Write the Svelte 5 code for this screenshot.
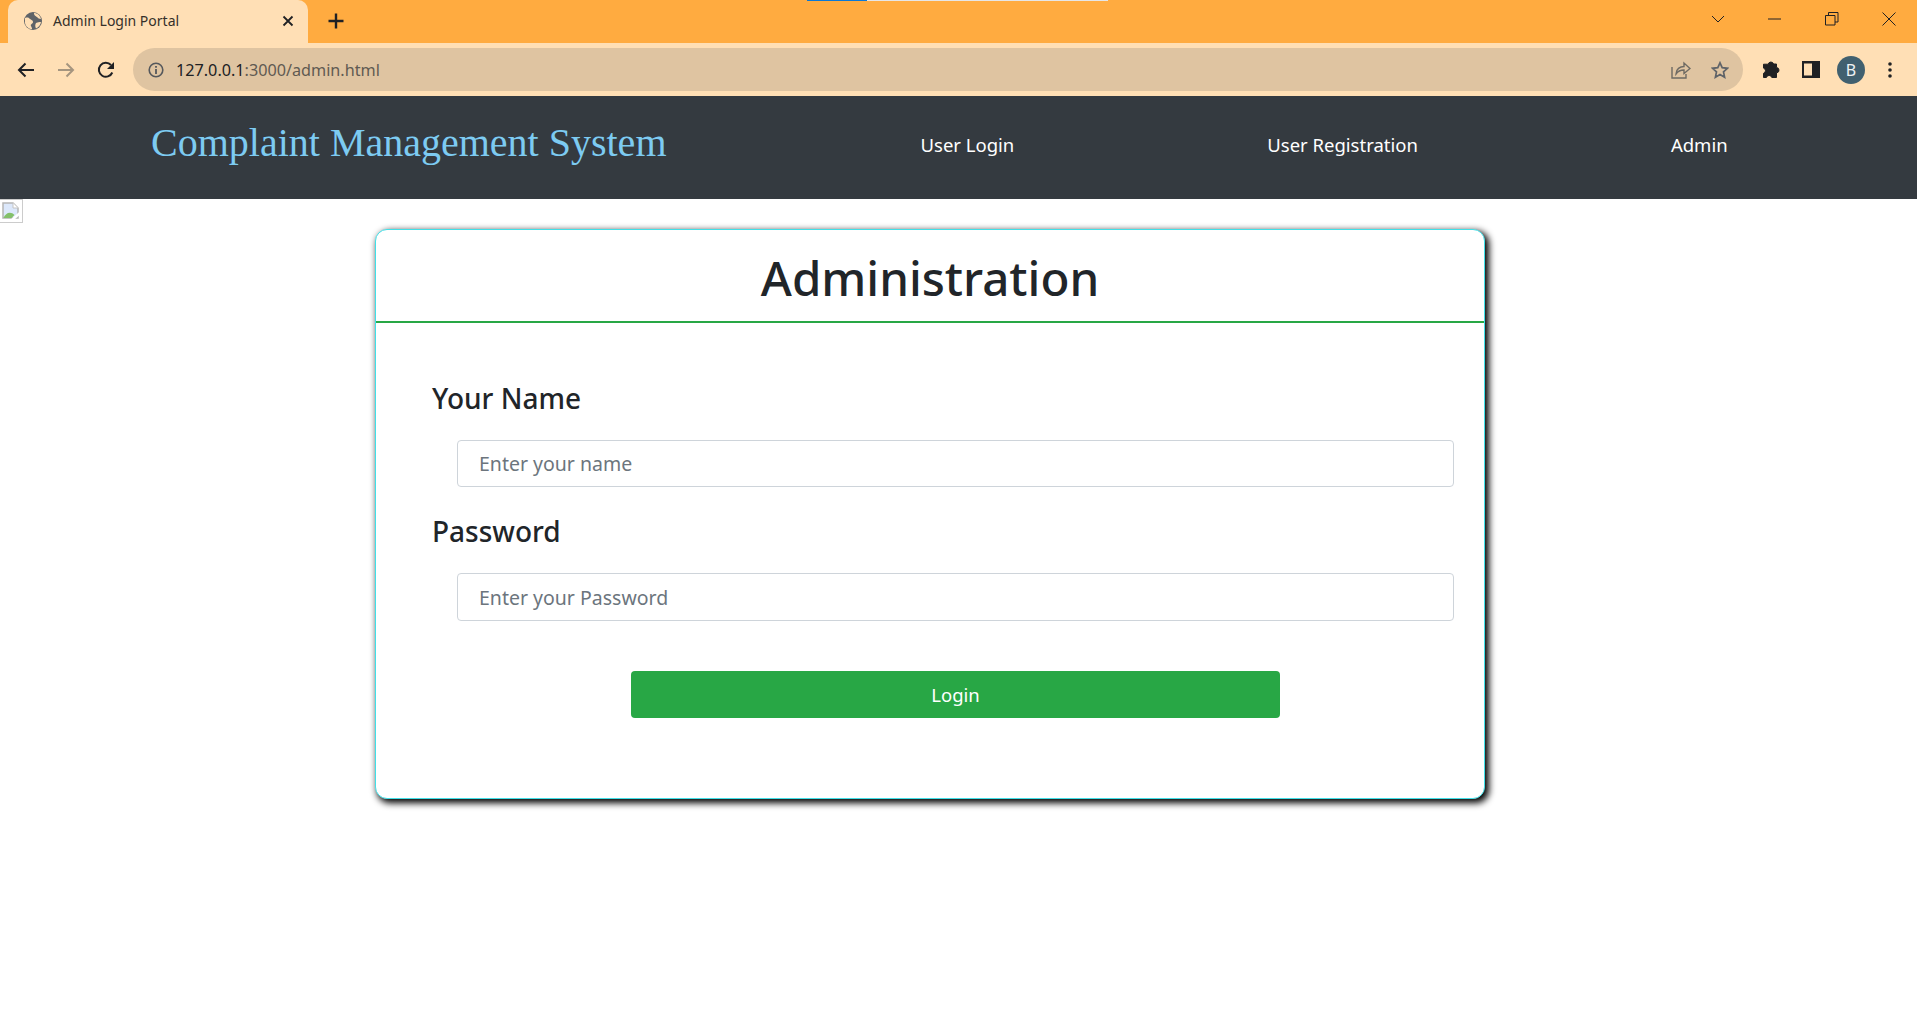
<script lang="ts">
	const navLinks = [
		{ label: 'User Login', cls: 'first' },
		{ label: 'User Registration', cls: 'second' },
		{ label: 'Admin', cls: 'third' }
	];
</script>

<div class="tabstrip">
	<div class="loadbar"><span></span></div>
	<div class="tab">
		<svg class="globe" width="18" height="18" viewBox="0 0 18 18">
			<circle cx="9" cy="9" r="9" fill="#5f6368" />
			<path d="M1 6c3-1 4 0 5 1s3 1 3 3-3 2-2 4 1 2 1 3c-3 0-6-2-7-6zM10 1c3 0 6 2 7 6-2 0-3-1-4-2s-3-1-3-4zM12 11c2-1 3-1 5-1-.5 3-2 5-5 6.500-1-2-1-4 0-5.500z" fill="#ffdfb5" />
		</svg>
		<span class="tab-title">Admin Login Portal</span>
		<svg class="tab-close" width="12" height="12" viewBox="0 0 12 12">
			<path d="M1.500 1.500l9 9M10.500 1.500l-9 9" stroke="#202124" stroke-width="1.800" fill="none" />
		</svg>
	</div>
	<svg class="new-tab" width="16" height="16" viewBox="0 0 16 16">
		<path d="M8 .5v15M.5 8h15" stroke="#202124" stroke-width="2.400" fill="none" />
	</svg>
	<div class="window-btns">
		<svg class="chev" width="14" height="8" viewBox="0 0 14 8">
			<path d="M1 1l6 6 6-6" stroke="#202124" fill="none" />
		</svg>
		<svg class="win-min" width="14" height="2" viewBox="0 0 14 2">
			<path d="M0 1h13" stroke="#202124" />
		</svg>
		<svg class="win-max" width="14" height="14" viewBox="0 0 14 14">
			<path d="M.5 3.500h9.500v9.500H.5zM3.500 3.500V.5h9.500v9.500H10" stroke="#202124" fill="none" />
		</svg>
		<svg class="win-close" width="14" height="14" viewBox="0 0 14 14">
			<path d="M.5.5l13 13M13.500.5l-13 13" stroke="#202124" fill="none" />
		</svg>
	</div>
</div>

<div class="toolbar">
	<svg class="tb-back" width="18" height="16" viewBox="0 0 18 16">
		<path d="M17 8H2M8.500 1.500 2 8l6.500 6.500" stroke="#202124" stroke-width="2" fill="none" />
	</svg>
	<svg class="tb-fwd" width="18" height="16" viewBox="0 0 18 16">
		<path d="M1 8h15M9.500 1.500 16 8l-6.500 6.500" stroke="#a5957f" stroke-width="2" fill="none" />
	</svg>
	<svg class="tb-reload" width="18" height="18" viewBox="0 0 18 18">
		<path d="M15.300 11.500A7 7 0 1 1 14 4" stroke="#202124" stroke-width="2" fill="none" />
		<path d="M17 1v7h-7z" fill="#202124" />
	</svg>
	<div class="omnibox">
		<svg class="info" width="16" height="16" viewBox="0 0 16 16">
			<circle cx="8" cy="8" r="6.800" stroke="#55585c" stroke-width="1.600" fill="none" />
			<path d="M8 7v5M8 4v1.800" stroke="#55585c" stroke-width="1.800" />
		</svg>
		<span class="url"><span class="host">127.0.0.1</span>:3000/admin.html</span>
		<svg class="share" width="20" height="18" viewBox="0 0 20 18">
			<path d="M1 6v11h14v-4" stroke="#6e6a63" stroke-width="1.400" fill="none" />
			<path d="M5 13c0-5 4-7.500 8-7.500V2l6 5.500-6 5V9c-3 0-6 1-8 4z" stroke="#6e6a63" stroke-width="1.400" fill="none" />
		</svg>
		<svg class="star" width="18" height="18" viewBox="0 0 18 18">
			<path d="M9 1.800l2.200 4.900 5.300.6-4 3.600 1.100 5.300L9 13.500l-4.600 2.700 1.100-5.300-4-3.600 5.300-.6z" stroke="#5f6368" stroke-width="1.700" fill="none" />
		</svg>
	</div>
	<svg class="puzzle" width="18" height="18" viewBox="0 0 18 18">
		<path d="M6.200 3.200a2.800 2.800 0 0 1 5.400-.2H14.500v3.500a2.700 2.700 0 0 1 .5 5.300h-.5V16.500H9.800a2.800 2.800 0 0 0-5.400 0H1.500V12.300a2.700 2.700 0 0 0 0-5.200V3.200z" fill="#202124" stroke="#202124" stroke-linejoin="round" />
	</svg>
	<svg class="panel" width="18" height="17" viewBox="0 0 18 17">
		<path d="M0 0h18v17H0zM2 2.500v12h8v-12z" fill="#202124" fill-rule="evenodd" />
	</svg>
	<div class="avatar">B</div>
	<svg class="kebab" width="4" height="16" viewBox="0 0 4 16">
		<circle cx="2" cy="2" r="1.800" fill="#202124" />
		<circle cx="2" cy="8" r="1.800" fill="#202124" />
		<circle cx="2" cy="14" r="1.800" fill="#202124" />
	</svg>
</div>

<nav class="navbar">
	<a class="brand" href="#top">Complaint Management System</a>
	{#each navLinks as link}
		<a class="nav-link {link.cls}" href="#top">{link.label}</a>
	{/each}
</nav>

<div class="broken-img">
	<svg width="20" height="20" viewBox="0 0 20 20">
		<path d="M2 2h10l5 5v10H2z" fill="#dce8fb" stroke="#b5b5b5" stroke-width="1.500" />
		<path d="M2.500 17c2-5 7-7 11-3l-3 3z" fill="#83c06a" />
		<path d="M11 19 19 12" stroke="#fff" stroke-width="2.500" />
		<path d="M12 2v5h5" fill="#fff" stroke="#c4c4c4" />
	</svg>
</div>

<main class="page">
	<form class="card">
		<h1 class="card-title">Administration</h1>
		<div class="card-body">
			<label class="field-label" for="name">Your Name</label>
			<input class="field" id="name" type="text" placeholder="Enter your name" />
			<label class="field-label second-label" for="password">Password</label>
			<input class="field pass-field" id="password" type="password" placeholder="Enter your Password" />
			<button class="login" type="button">Login</button>
		</div>
	</form>
</main>

<style>
	:global(body) {
		margin: 0;
		background: #fff;
		font-family: 'Open Sans', 'Noto Sans', sans-serif;
		color: #212529;
	}

	/* browser chrome */
	.tabstrip {
		height: 43px;
		background: #ffab40;
		display: flex;
		align-items: flex-start;
		position: relative;
	}
	.loadbar {
		position: absolute;
		top: 0;
		left: 807px;
		width: 301px;
		height: 1px;
		background: #e6e6e6;
	}
	.loadbar span {
		display: block;
		width: 60px;
		height: 1px;
		background: #0a78d6;
	}
	.tab {
		margin-left: 8px;
		width: 300px;
		height: 43px;
		box-sizing: border-box;
		background: #ffdfb5;
		border-radius: 10px 10px 0 0;
		display: flex;
		align-items: center;
		padding: 0 14px 2px 16px;
	}
	.tab-title {
		margin-left: 11px;
		font-size: 14px;
		font-family: 'Noto Sans', sans-serif;
		color: #35302a;
		flex: 1;
	}
	.new-tab {
		margin: 13px 0 0 20px;
	}
	.window-btns {
		margin-left: auto;
		height: 37px;
		display: flex;
		align-items: center;
		padding-right: 21px;
		gap: 43px;
	}

	.toolbar {
		height: 53px;
		box-sizing: border-box;
		background: #ffdfb5;
		display: flex;
		align-items: center;
		padding: 0 15px 0 17px;
	}
	.tb-fwd {
		margin-left: 22px;
	}
	.tb-reload {
		margin-left: 22px;
	}
	.omnibox {
		margin-left: 18px;
		width: 1610px;
		height: 43px;
		box-sizing: border-box;
		background: #dfc4a1;
		border-radius: 22px;
		display: flex;
		align-items: center;
		padding: 0 14px 0 15px;
	}
	.url {
		margin-left: 12px;
		font-size: 16.200px;
		color: #5f5a52;
		font-family: 'Noto Sans', sans-serif;
		flex: 1;
	}
	.host {
		color: #202124;
	}
	.star {
		margin-left: 20px;
	}
	.puzzle {
		margin-left: 19px;
	}
	.panel {
		margin-left: 22px;
	}
	.avatar {
		margin-left: 17px;
		width: 28px;
		height: 28px;
		border-radius: 50%;
		background: #41606f;
		color: #eef2f4;
		font-size: 16px;
		font-family: 'Noto Sans', sans-serif;
		display: flex;
		align-items: center;
		justify-content: center;
	}
	.kebab {
		margin-left: 23px;
	}

	/* page */
	.navbar {
		height: 103px;
		background: #343a40;
		display: flex;
		align-items: center;
		padding-left: 151px;
	}
	.brand {
		font-family: 'Liberation Serif', serif;
		font-size: 40px;
		color: #7dcbf2;
		text-decoration: none;
		padding-bottom: 10px;
	}
	.nav-link {
		font-size: 18.500px;
		color: #fff;
		text-decoration: none;
		font-family: 'Noto Sans', sans-serif;
		padding-bottom: 6px;
	}
	.first {
		margin-left: 254px;
	}
	.second {
		margin-left: 253px;
	}
	.third {
		margin-left: 253px;
	}

	.broken-img {
		position: absolute;
		left: 0;
		top: 199px;
		width: 23px;
		height: 24px;
		box-sizing: border-box;
		border: 1px solid #ccc;
		border-left: none;
		display: flex;
		align-items: center;
		justify-content: center;
	}

	.page {
		padding: 30px 0 222px 375px;
	}
	.card {
		width: 1110px;
		height: 570px;
		box-sizing: border-box;
		background: #fff;
		border: 1px solid #40e0e8;
		border-radius: 12px;
		box-shadow: 3px 3px 7px 1px #000;
	}
	.card-title {
		margin: 0;
		height: 93px;
		box-sizing: border-box;
		border-bottom: 2px solid #28a745;
		text-align: center;
		font-size: 47.500px;
		line-height: 95px;
		font-weight: 500;
		font-family: 'Noto Sans', sans-serif;
	}
	.card-body {
		padding: 57px 30px 0 56px;
		display: flex;
		flex-direction: column;
	}
	.field-label {
		font-size: 28px;
		font-weight: 500;
		line-height: 36px;
		font-family: 'Noto Sans', sans-serif;
	}
	.second-label {
		margin-top: 26px;
	}
	.field {
		margin: 24px 0 0 25px;
		width: 997px;
		height: 47px;
		box-sizing: border-box;
		border: 1px solid #ced4da;
		border-radius: 4px;
		padding: 0 21px;
		font-size: 19.500px;
		font-family: 'Noto Sans', sans-serif;
		color: #495057;
	}
	.pass-field {
		height: 48px;
	}
	.field::placeholder {
		color: #6c757d;
		opacity: 1;
	}
	.login {
		margin: 50px 0 0 199px;
		width: 649px;
		height: 47px;
		border: none;
		border-radius: 4px;
		background: #28a745;
		color: #fff;
		font-size: 18.500px;
		font-family: 'Noto Sans', sans-serif;
	}
</style>
